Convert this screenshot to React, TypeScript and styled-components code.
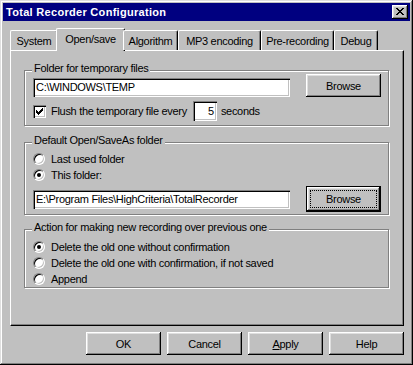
import React from 'react'
import styled, { createGlobalStyle } from 'styled-components'

const GlobalStyle = createGlobalStyle`
    html, body {
        margin: 0;
        padding: 0;
        background: #c0c0c0;
    }
    * {
        box-sizing: border-box;
    }
`

const Window = styled.div`
    width: 413px;
    height: 365px;
    padding: 3px;
    display: flex;
    flex-direction: column;
    background: #c0c0c0;
    box-shadow: inset -1px -1px 0 #000, inset 1px 1px 0 #dfdfdf, inset -2px -2px 0 #808080, inset 2px 2px 0 #fff;
    font-family: 'Liberation Sans', Arial, sans-serif;
    font-size: 11px;
    letter-spacing: -0.3px;
    color: #000;
`

const TitleBar = styled.div`
    height: 18px;
    flex: none;
    display: flex;
    align-items: center;
    padding: 0 2px 0 3px;
    background: #000080;
    color: #fff;
`

const Title = styled.span`
    flex: 1;
    font-weight: bold;
    letter-spacing: 0.3px;
    line-height: 18px;
    white-space: nowrap;
`

const CloseButton = styled.div`
    width: 16px;
    height: 14px;
    padding: 3px 0 0 4px;
    background: #c0c0c0;
    box-shadow: inset -1px -1px 0 #000, inset 1px 1px 0 #fff, inset -2px -2px 0 #808080, inset 2px 2px 0 #dfdfdf;

    svg {
        display: block;
    }
`

const Body = styled.div`
    flex: 1;
    display: flex;
    flex-direction: column;
    padding: 7px 6px 7px 7px;
`

const TabStrip = styled.div`
    position: relative;
    z-index: 1;
    height: 22px;
    flex: none;
    display: flex;
    align-items: flex-end;
`

const Tab = styled.div<{ $active?: boolean; $width: number }>`
    width: ${({ $width, $active }) => $width + ($active ? 4 : 0)}px;
    height: ${({ $active }) => ($active ? 23 : 20)}px;
    margin: ${({ $active }) => ($active ? '0 -2px -1px' : '0')};
    padding-top: 2px;
    flex: none;
    text-align: center;
    line-height: 17px;
    white-space: nowrap;
    background: #c0c0c0;
    border-top: 1px solid #fff;
    border-left: 1px solid #fff;
    border-right: 1px solid #000;
    border-radius: 2px 2px 0 0;
    box-shadow: inset -1px 0 0 #808080;
`

const Panel = styled.div`
    height: 276px;
    flex: none;
    display: flex;
    flex-direction: column;
    padding: 19px 14px 0 13px;
    border-top: 1px solid #fff;
    border-left: 1px solid #fff;
    border-right: 1px solid #000;
    border-bottom: 1px solid #000;
    box-shadow: inset -1px -1px 0 #808080;
`

const Group = styled.div<{ $gap: number; $top: number; $bottom: number }>`
    position: relative;
    margin-top: ${({ $gap }) => $gap}px;
    padding: ${({ $top }) => $top}px 7px ${({ $bottom }) => $bottom}px 8px;
    display: flex;
    flex-direction: column;
    border: 1px solid #808080;
    box-shadow: 1px 1px 0 #fff, inset 1px 1px 0 #fff;
`

const Legend = styled.span`
    position: absolute;
    top: -9px;
    left: 7px;
    padding: 0 2px;
    line-height: 13px;
    background: #c0c0c0;
    white-space: nowrap;
`

const FieldRow = styled.div<{ $height: number }>`
    height: ${({ $height }) => $height}px;
    display: flex;
    align-items: center;
    gap: 16px;
`

const TextField = styled.div<{ $width?: number; $align?: string }>`
    height: ${({ $width }) => ($width ? 20 : 19)}px;
    ${({ $width }) => ($width ? `width: ${$width}px; flex: none;` : 'flex: 1;')}
    padding: 0 3px;
    line-height: ${({ $width }) => ($width ? 20 : 19)}px;
    text-align: ${({ $align }) => $align ?? 'left'};
    white-space: nowrap;
    overflow: hidden;
    background: #fff;
    box-shadow: inset 1px 1px 0 #808080, inset 2px 2px 0 #000, inset -1px -1px 0 #fff, inset -2px -2px 0 #c0c0c0;
`

const Button = styled.div<{ $default?: boolean; $height?: number }>`
    width: 75px;
    height: ${({ $height }) => $height ?? 23}px;
    flex: none;
    display: flex;
    padding: ${({ $default }) => ($default ? '3px 3px' : '0')};
    background: #c0c0c0;
    border: ${({ $default }) => ($default ? '1px solid #000' : 'none')};
    box-shadow: inset -1px -1px 0 #000, inset 1px 1px 0 #fff, inset -2px -2px 0 #808080, inset 2px 2px 0 #dfdfdf;
`

const ButtonLabel = styled.span<{ $focused?: boolean }>`
    flex: 1;
    display: flex;
    align-items: center;
    justify-content: center;
    border: 1px dotted ${({ $focused }) => ($focused ? '#000' : 'transparent')};
    white-space: nowrap;
`

const OptionRow = styled.div<{ $height: number }>`
    height: ${({ $height }) => $height}px;
    display: flex;
    align-items: center;
    white-space: nowrap;
`

const CheckBox = styled.span`
    width: 13px;
    height: 13px;
    flex: none;
    margin-right: 5px;
    display: flex;
    align-items: center;
    justify-content: center;
    background: #fff;
    box-shadow: inset 1px 1px 0 #808080, inset 2px 2px 0 #000, inset -1px -1px 0 #fff, inset -2px -2px 0 #c0c0c0;

    svg {
        display: block;
    }
`

const Radio = styled.span<{ $checked?: boolean }>`
    width: 12px;
    height: 12px;
    flex: none;
    margin-right: 6px;
    display: flex;
    align-items: center;
    justify-content: center;
    border-radius: 50%;
    border: 1px solid;
    border-color: #808080 #fff #fff #808080;
    background: #fff;
    box-shadow: inset 1px 1px 0 #000, inset -1px -1px 0 #c0c0c0;

    &::after {
        content: '';
        width: 4px;
        height: 4px;
        border-radius: 50%;
        background: ${({ $checked }) => ($checked ? '#000' : 'transparent')};
    }
`

const FlushLabel = styled.span`
    margin-right: 6px;
`

const Unit = styled.span`
    margin-left: 4px;
`

const ButtonBar = styled.div`
    margin-top: 6px;
    display: flex;
    justify-content: flex-end;
    gap: 6px;
`

const tabs = [
    { label: 'System', width: 48 },
    { label: 'Open/save', width: 65, active: true },
    { label: 'Algorithm', width: 55 },
    { label: 'MP3 encoding', width: 83 },
    { label: 'Pre-recording', width: 73 },
    { label: 'Debug', width: 44 },
]

const CloseGlyph = () => (
    <svg width='8' height='7' viewBox='0 0 8 7' shapeRendering='crispEdges'>
        <path fill='#000' d='M0 0h2v1H0zM6 0h2v1H6zM1 1h2v1H1zM5 1h2v1H5zM2 2h4v1H2zM3 3h2v1H3zM2 4h4v1H2zM1 5h2v1H1zM5 5h2v1H5zM0 6h2v1H0zM6 6h2v1H6z' />
    </svg>
)

const CheckGlyph = () => (
    <svg width='7' height='7' viewBox='0 0 7 7' shapeRendering='crispEdges'>
        <path fill='#000' d='M6 0h1v1H6zM5 1h2v1H5zM0 2h1v1H0zM4 2h3v1H4zM0 3h2v1H0zM3 3h3v1H3zM0 4h5v1H0zM1 5h3v1H1zM2 6h1v1H2z' />
    </svg>
)

const App = () => {
    return (
        <>
            <GlobalStyle />
            <Window>
                <TitleBar>
                    <Title>Total Recorder Configuration</Title>
                    <CloseButton>
                        <CloseGlyph />
                    </CloseButton>
                </TitleBar>
                <Body>
                    <TabStrip>
                        {tabs.map(tab => (
                            <Tab key={tab.label} $width={tab.width} $active={tab.active}>
                                {tab.label}
                            </Tab>
                        ))}
                    </TabStrip>
                    <Panel>
                        <Group $gap={0} $top={3} $bottom={4}>
                            <Legend>Folder for temporary files</Legend>
                            <FieldRow $height={23} style={{ alignItems: 'flex-end' }}>
                                <TextField>C:\WINDOWS\TEMP</TextField>
                                <Button><ButtonLabel>Browse</ButtonLabel></Button>
                            </FieldRow>
                            <OptionRow $height={20} style={{ marginTop: 4 }}>
                                <CheckBox><CheckGlyph /></CheckBox>
                                <FlushLabel>Flush the temporary file every</FlushLabel>
                                <TextField $width={24} $align='right'>5</TextField>
                                <Unit>seconds</Unit>
                            </OptionRow>
                        </Group>

                        <Group $gap={16} $top={8} $bottom={2}>
                            <Legend>Default Open/SaveAs folder</Legend>
                            <OptionRow $height={16}>
                                <Radio />
                                Last used folder
                            </OptionRow>
                            <OptionRow $height={16}>
                                <Radio $checked />
                                This folder:
                            </OptionRow>
                            <FieldRow $height={26} style={{ marginTop: 3 }}>
                                <TextField>E:\Program Files\HighCriteria\TotalRecorder</TextField>
                                <Button $default $height={26}><ButtonLabel $focused>Browse</ButtonLabel></Button>
                            </FieldRow>
                        </Group>

                        <Group $gap={14} $top={9} $bottom={0}>
                            <Legend>Action for making new recording over previous one</Legend>
                            <OptionRow $height={16}>
                                <Radio $checked />
                                Delete the old one without confirmation
                            </OptionRow>
                            <OptionRow $height={16}>
                                <Radio />
                                Delete the old one with confirmation, if not saved
                            </OptionRow>
                            <OptionRow $height={16}>
                                <Radio />
                                Append
                            </OptionRow>
                        </Group>
                    </Panel>
                    <ButtonBar>
                        <Button><ButtonLabel>OK</ButtonLabel></Button>
                        <Button><ButtonLabel>Cancel</ButtonLabel></Button>
                        <Button><ButtonLabel><u>A</u>pply</ButtonLabel></Button>
                        <Button><ButtonLabel>Help</ButtonLabel></Button>
                    </ButtonBar>
                </Body>
            </Window>
        </>
    )
}

export default App
